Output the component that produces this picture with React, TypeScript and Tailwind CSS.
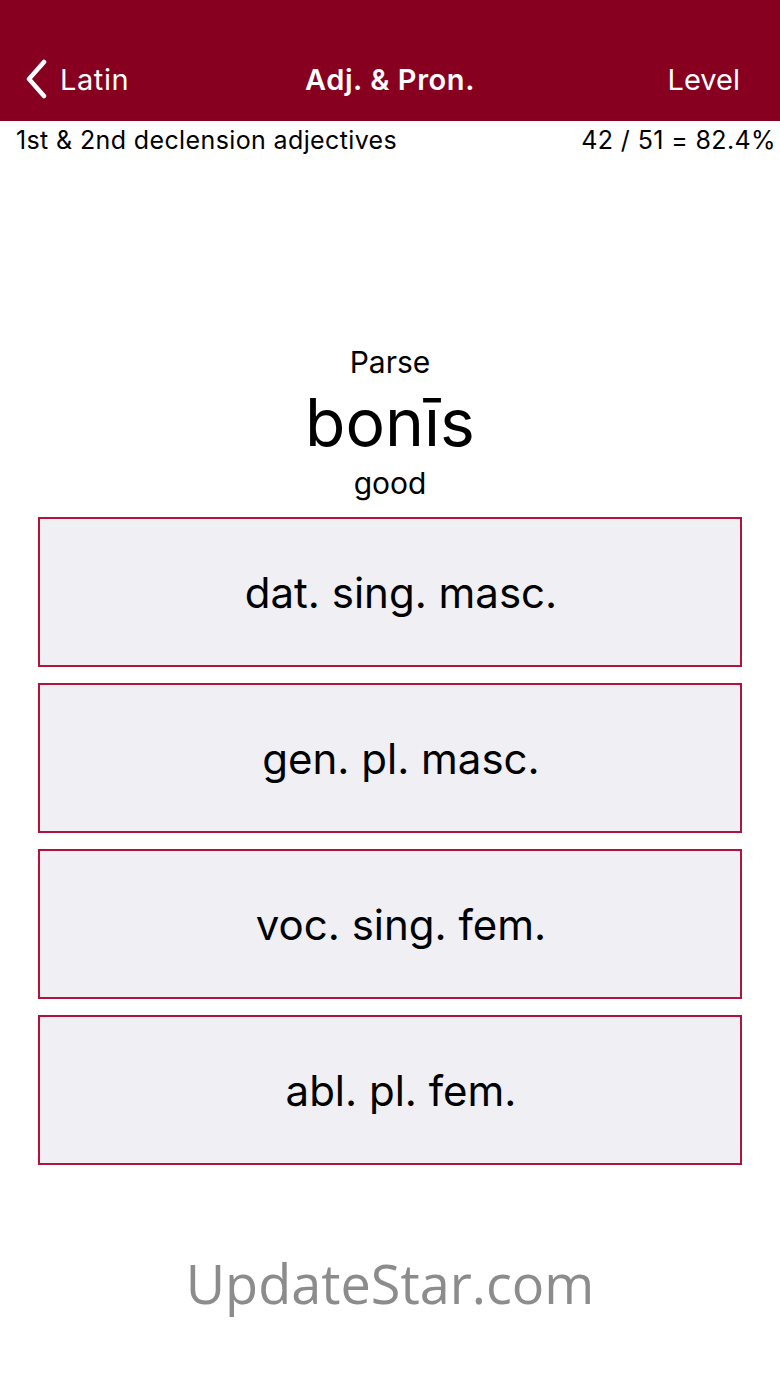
import type { FC } from "react";

const choices = [
  "dat. sing. masc.",
  "gen. pl. masc.",
  "voc. sing. fem.",
  "abl. pl. fem.",
];

const App: FC = () => {
  return (
    <div className="min-h-screen w-[780px] bg-white font-['Inter',sans-serif] text-black">
      {/* Nav bar */}
      <div className="flex h-[121px] items-end bg-[#87001f] pb-[20px] text-white">
        <div className="grid w-full grid-cols-3 items-center">
          <div className="flex items-center gap-[12px] pl-[24px]">
            <svg width="24" height="40" viewBox="0 0 24 40" fill="none">
              <path
                d="M20 3 L5 20 L20 37"
                stroke="white"
                strokeWidth="4.5"
                strokeLinecap="round"
                strokeLinejoin="round"
              />
            </svg>
            <span className="text-[29px] tracking-[0.02em]">Latin</span>
          </div>
          <div className="text-center text-[29px] font-semibold tracking-[0.02em]">
            Adj. &amp; Pron.
          </div>
          <div className="pr-[40px] text-right text-[29px]">Level</div>
        </div>
      </div>

      {/* Sub header */}
      <div className="flex h-[40px] items-center justify-between pl-[16px] pr-[4px] text-[25px] tracking-[0.015em]">
        <span>1st &amp; 2nd declension adjectives</span>
        <span>42 / 51 = 82.4%</span>
      </div>

      {/* Prompt */}
      <div className="mt-[183px] flex flex-col items-center">
        <div className="text-[30px] leading-[36px]">Parse</div>
        <div className="text-[66px] leading-[84px]">bonīs</div>
        <div className="text-[30px] leading-[38px]">good</div>
      </div>

      {/* Choices */}
      <div className="mt-[15px] flex flex-col gap-[16px] px-[38px]">
        {choices.map((c) => (
          <button
            key={c}
            className="flex h-[150px] w-[704px] items-center justify-center border-2 border-[#b3123c] bg-[#efeff4] pl-[22px] text-[42px]"
          >
            {c}
          </button>
        ))}
      </div>

      {/* Watermark */}
      <div className="mt-[78px] text-center font-['Open_Sans',sans-serif] text-[54px] text-[#8c8c8c]">
        UpdateStar.com
      </div>
    </div>
  );
};

export default App;
